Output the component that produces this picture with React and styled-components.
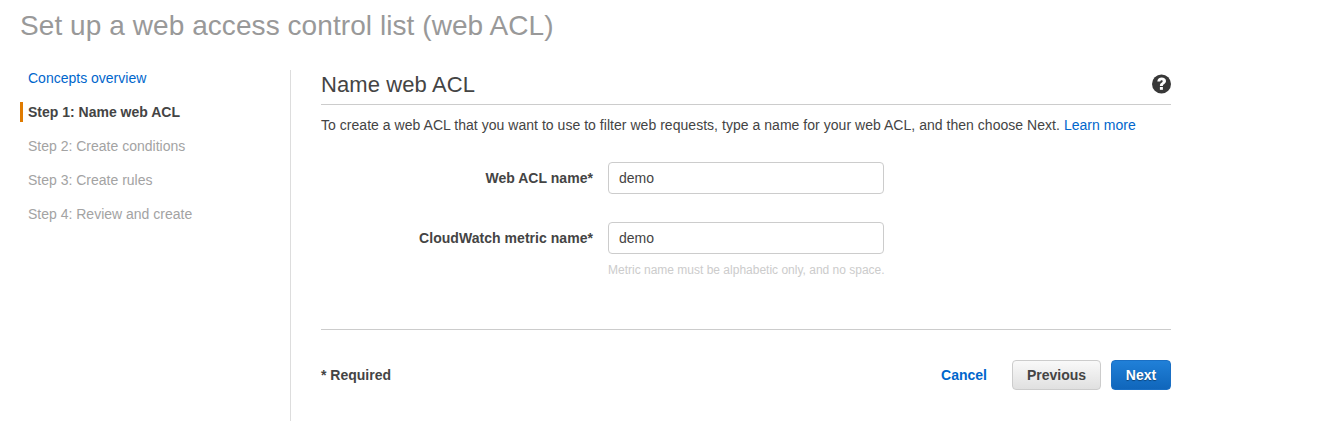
import React from "react";
import styled, { createGlobalStyle } from "styled-components";

const Global = createGlobalStyle`
  html, body { margin: 0; padding: 0; background: #fff; }
  body { font-family: "Liberation Sans", Arial, sans-serif; color: #444; font-size: 14px; }
  * { box-sizing: border-box; }
`;

const Page = styled.div`
  width: 1329px;
  height: 435px;
  overflow: hidden;
  padding: 0 158px 0 20px;
`;

const Title = styled.h1`
  margin: 0;
  height: 70px;
  padding-top: 10px;
  font-size: 28px;
  letter-spacing: 0.07px;
  line-height: 32px;
  font-weight: 400;
  color: #999;
`;

const Layout = styled.div`
  display: flex;
  height: 351px;
`;

const Sidebar = styled.nav`
  width: 271px;
  flex: none;
  display: flex;
  flex-direction: column;
  gap: 14px;
  margin-bottom: 0;
  border-right: 1px solid #ddd;
`;

const NavItem = styled.div`
  height: 20px;
  padding-left: ${(p) => (p.$active ? "5px" : "8px")};
  border-left: ${(p) => (p.$active ? "3px solid #e07b00" : "none")};
  font-size: 14px;
  line-height: 16px;
  display: flex;
  align-items: center;
  font-weight: ${(p) => (p.$active ? 700 : 400)};
  color: ${(p) => p.$color};
  &:first-child { margin-top: -2px; }
`;

const Main = styled.main`
  width: 850px;
  margin-left: 30px;
  flex: none;
  display: flex;
  flex-direction: column;
`;

const Header = styled.div`
  height: 35px;
  display: flex;
  align-items: flex-start;
  justify-content: space-between;
  border-bottom: 1px solid #ccc;
`;

const Heading = styled.h2`
  margin: 0;
  padding-top: 2px;
  font-size: 22px;
  letter-spacing: 0.1px;
  line-height: 25px;
  font-weight: 400;
  color: #444;
`;

const HelpIcon = styled.svg`
  width: 19px;
  height: 20px;
  margin-top: 4px;
`;

const Intro = styled.p`
  margin: 12px 0 0;
  font-size: 14px;
  letter-spacing: 0.035px;
  line-height: 16px;
  color: #444;
`;

const Link = styled.a`
  color: #0066cc;
  text-decoration: none;
  font-weight: ${(p) => (p.$bold ? 700 : 400)};
`;

const Form = styled.div`
  margin-top: 29px;
  display: flex;
  flex-direction: column;
  gap: 28px;
`;

const Field = styled.div`
  display: flex;
  align-items: flex-start;
  gap: 15px;
`;

const Label = styled.label`
  width: 272px;
  flex: none;
  text-align: right;
  font-size: 14px;
  letter-spacing: 0.04px;
  line-height: 32px;
  font-weight: 700;
  color: #444;
`;

const Control = styled.div`
  width: 276px;
  flex: none;
`;

const Input = styled.input`
  display: block;
  width: 276px;
  height: 32px;
  padding: 0 10px;
  border: 1px solid #ccc;
  border-radius: 4px;
  font: 14px "Liberation Sans", Arial, sans-serif;
  color: #444;
  outline: none;
`;

const Hint = styled.div`
  margin-top: 9px;
  font-size: 12px;
  line-height: 14px;
  color: #ccc;
  white-space: nowrap;
`;

const Footer = styled.div`
  margin-top: 52px;
  border-top: 1px solid #ccc;
  padding-top: 30px;
  display: flex;
  align-items: center;
  justify-content: space-between;
`;

const Required = styled.div`
  font-size: 14px;
  font-weight: 700;
  color: #444;
`;

const Actions = styled.div`
  display: flex;
  align-items: center;
`;

const CancelLink = styled(Link)`
  margin-right: 25px;
  font-size: 14px;
`;

const Button = styled.button`
  height: 30px;
  width: ${(p) => p.$w}px;
  margin-left: ${(p) => p.$ml || 0}px;
  padding: 0 0 1px;
  border-radius: 4px;
  font: 700 14px "Liberation Sans", Arial, sans-serif;
  border: 1px solid ${(p) => (p.$primary ? "#1a6fc4" : "#ccc")};
  color: ${(p) => (p.$primary ? "#fff" : "#444")};
  background: ${(p) =>
    p.$primary
      ? "linear-gradient(#2080d8, #1066bb)"
      : "linear-gradient(#f9f9f9, #e0e0e0)"};
  text-shadow: ${(p) => (p.$primary ? "0 1px 1px rgba(0,0,0,.4)" : "none")};
`;

export default function App() {
  return (
    <Page>
      <Global />
      <Title>Set up a web access control list (web ACL)</Title>
      <Layout>
        <Sidebar>
          <NavItem $color="#0066cc">Concepts overview</NavItem>
          <NavItem $active $color="#444">Step 1: Name web ACL</NavItem>
          <NavItem $color="#a3a3a3">Step 2: Create conditions</NavItem>
          <NavItem $color="#a3a3a3">Step 3: Create rules</NavItem>
          <NavItem $color="#a3a3a3">Step 4: Review and create</NavItem>
        </Sidebar>
        <Main>
          <Header>
            <Heading>Name web ACL</Heading>
            <HelpIcon viewBox="0.5 0 19 20">
              <circle cx="10" cy="10" r="9.5" fill="#383838" />
              <path d="M5.8 7.6C6 5 7.8 3.6 10.2 3.6c2.5 0 4.3 1.4 4.3 3.5 0 1.5-.8 2.4-2 3.1-.9.5-1.1.9-1.1 1.8H8.4c0-1.7.5-2.5 1.7-3.3.8-.5 1.1-.9 1.1-1.4 0-.6-.5-1-1.1-1-.7 0-1.2.4-1.3 1.3z" fill="#fff" />
              <rect x="8.4" y="13" width="3" height="2.8" fill="#fff" />
            </HelpIcon>
          </Header>
          <Intro>
            To create a web ACL that you want to use to filter web requests, type a name for your web ACL, and then choose Next.{" "}
            <Link>Learn more</Link>
          </Intro>
          <Form>
            <Field>
              <Label>Web ACL name*</Label>
              <Control>
                <Input defaultValue="demo" />
              </Control>
            </Field>
            <Field>
              <Label>CloudWatch metric name*</Label>
              <Control>
                <Input defaultValue="demo" />
                <Hint>Metric name must be alphabetic only, and no space.</Hint>
              </Control>
            </Field>
          </Form>
          <Footer>
            <Required>* Required</Required>
            <Actions>
              <CancelLink $bold>Cancel</CancelLink>
              <Button $w={89}>Previous</Button>
              <Button $w={60} $ml={10} $primary>Next</Button>
            </Actions>
          </Footer>
        </Main>
      </Layout>
    </Page>
  );
}
